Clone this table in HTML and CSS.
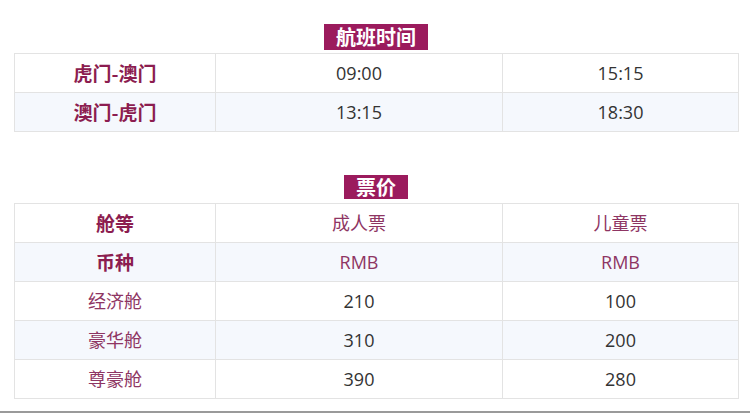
FILE: index.html
```html
<!DOCTYPE html>
<html lang="zh">
<head>
<meta charset="utf-8">
<link rel="stylesheet" href="styles.css">
</head>
<body>
<div class="page">
  <section class="block first">
    <div class="badge-wrap"><span class="badge">航班时间</span></div>
    <table class="grid">
      <colgroup><col class="c1"><col class="c2"><col class="c3"></colgroup>
      <tr><td class="label">虎门-澳门</td><td class="num">09:00</td><td class="num">15:15</td></tr>
      <tr class="alt"><td class="label">澳门-虎门</td><td class="num">13:15</td><td class="num">18:30</td></tr>
    </table>
  </section>
  <section class="block second">
    <div class="badge-wrap"><span class="badge">票价</span></div>
    <table class="grid">
      <colgroup><col class="c1"><col class="c2"><col class="c3"></colgroup>
      <tr><td class="label">舱等</td><td class="head">成人票</td><td class="head">儿童票</td></tr>
      <tr class="alt"><td class="label">币种</td><td class="head">RMB</td><td class="head">RMB</td></tr>
      <tr><td class="head">经济舱</td><td class="num">210</td><td class="num">100</td></tr>
      <tr class="alt"><td class="head">豪华舱</td><td class="num">310</td><td class="num">200</td></tr>
      <tr><td class="head">尊豪舱</td><td class="num">390</td><td class="num">280</td></tr>
    </table>
  </section>
  <div class="bottom-rule"></div>
</div>
</body>
</html>
```
FILE: styles.css
```css
html, body {
  margin: 0;
  padding: 0;
  background: #ffffff;
}
body {
  font-family: "Open Sans", "Noto Sans CJK SC", sans-serif;
  width: 750px;
  height: 413px;
  overflow: hidden;
}
.page {
  padding: 24px 12px 0 14px;
}
.block.second {
  margin-top: 43px;
}
.badge-wrap {
  display: flex;
  justify-content: center;
  margin-bottom: 3px;
}
.second .badge-wrap {
  margin-bottom: 4px;
}
.badge {
  display: inline-block;
  background: #9b1b5d;
  color: #ffffff;
  font-family: "Noto Sans CJK SC", sans-serif;
  font-weight: 700;
  font-size: 20px;
  line-height: 26px;
  height: 26px;
  padding: 0 12px;
}
.second .badge {
  height: 24px;
  line-height: 24px;
}
.grid {
  width: 724px;
  border-collapse: collapse;
  table-layout: fixed;
}
.c1 { width: 201px; }
.c2 { width: 287px; }
.c3 { width: 236px; }
.grid td {
  border: 1px solid #e3e3e3;
  height: 38px;
  padding: 0;
  text-align: center;
  vertical-align: middle;
  font-size: 18px;
  line-height: 24px;
}
.grid tr.alt td {
  background: #f5f8fd;
}
.grid td.label {
  color: #8c1d50;
  font-weight: 700;
  font-family: "Noto Sans CJK SC", sans-serif;
  font-size: 19px;
}
.grid td.head {
  color: #8e3563;
  font-family: "Open Sans", "Noto Sans CJK SC", sans-serif;
}
.grid td.num {
  color: #333333;
}
.bottom-rule {
  margin: 12px -12px 0 -14px;
  border-top: 2px solid #9a9a9a;
}
```
